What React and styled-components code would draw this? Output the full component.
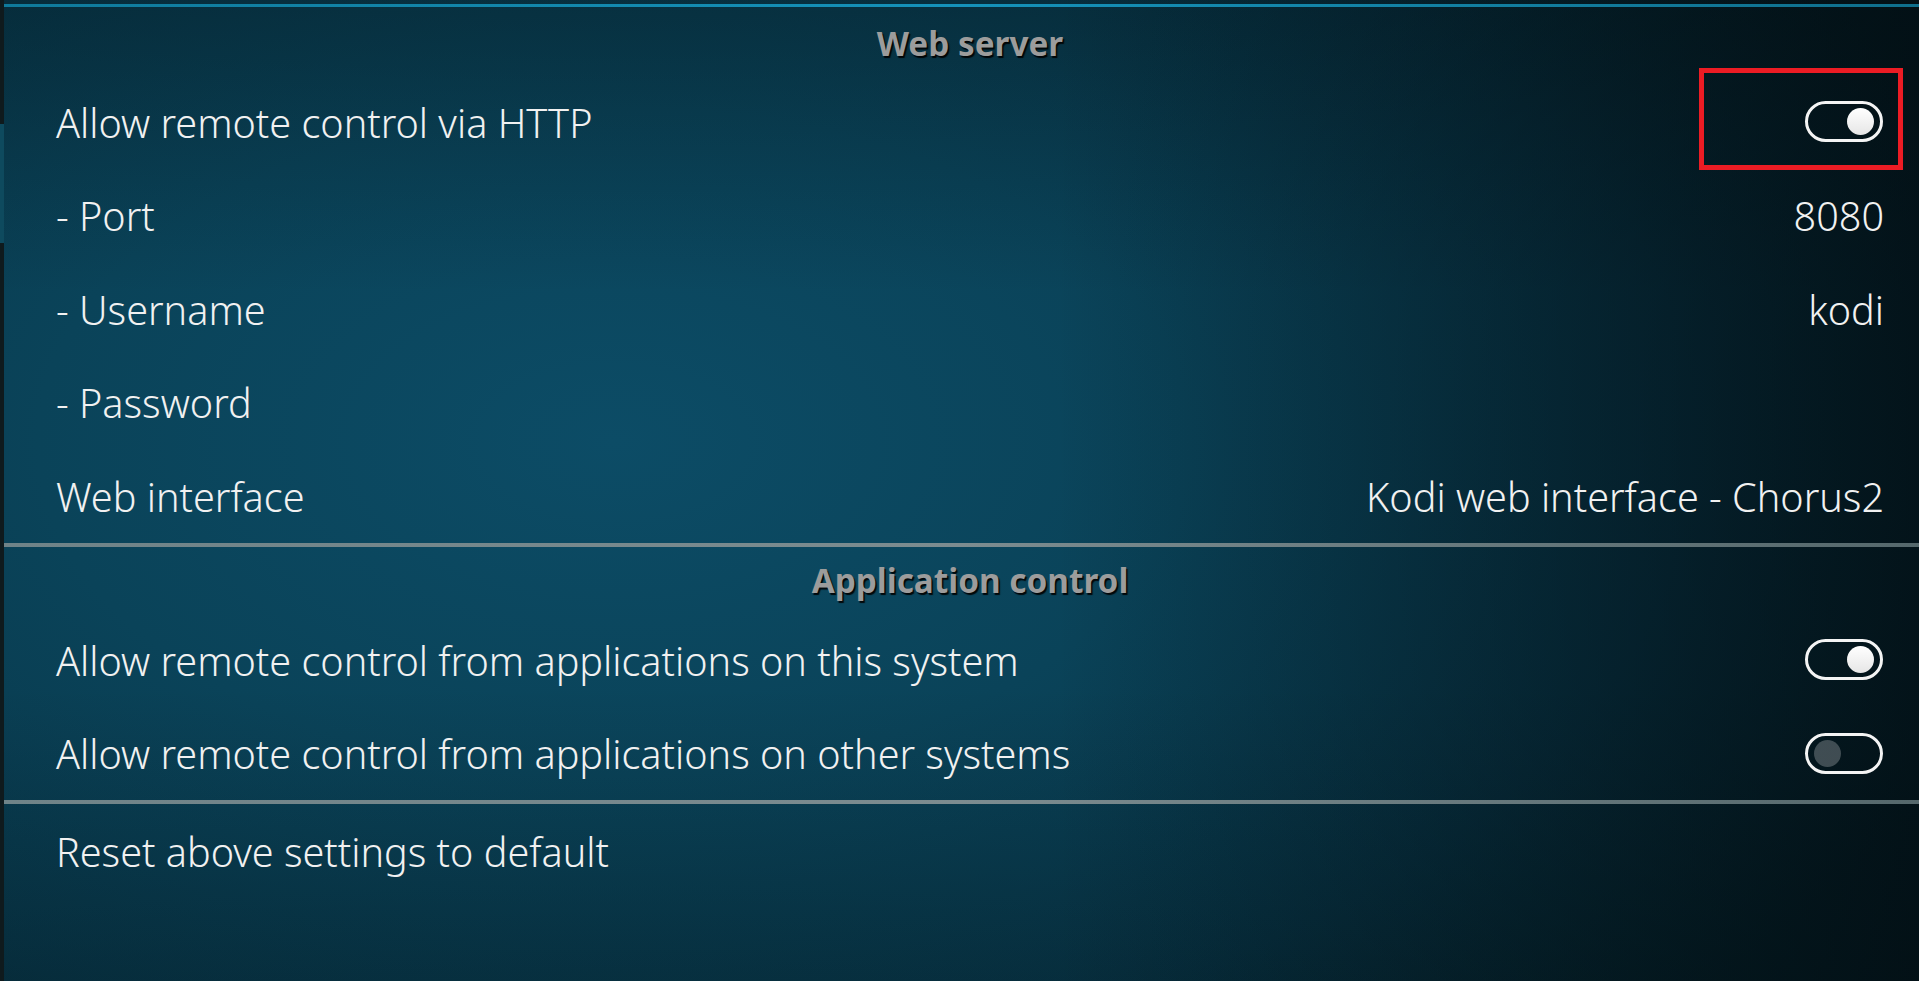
import React from 'react'
import styled, { createGlobalStyle } from 'styled-components'

const GlobalStyle = createGlobalStyle`
    html, body {
        margin: 0;
        padding: 0;
        height: 100%;
        background: #062a36;
    }
    body {
        font-family: "Noto Sans", "Open Sans", sans-serif;
        overflow: hidden;
    }
`

const webServer = [
    { label: 'Allow remote control via HTTP', toggle: true, on: true, marked: true },
    { label: '- Port', value: '8080' },
    { label: '- Username', value: 'kodi' },
    { label: '- Password' },
    { label: 'Web interface', value: 'Kodi web interface - Chorus2' },
]

const appControl = [
    { label: 'Allow remote control from applications on this system', toggle: true, on: true },
    { label: 'Allow remote control from applications on other systems', toggle: true, on: false },
]

const SettingRow = ({ item }) => {
    return (
        <Row>
            <Label>{item.label}</Label>
            {item.toggle ? (
                <Toggle $on={item.on}>
                    <Knob $on={item.on} />
                    {item.marked && <Marker />}
                </Toggle>
            ) : (
                item.value && <Value>{item.value}</Value>
            )}
        </Row>
    )
}

const App = () => {
    return (
        <Screen>
            <GlobalStyle />
            <EdgeStrip>
                <EdgeMarker />
            </EdgeStrip>
            <Main>
                <TopLine />
                <SectionTitle $h={68} $pt={4}>Web server</SectionTitle>
                {webServer.map((item) => (
                    <SettingRow key={item.label} item={item} />
                ))}
                <Divider />
                <SectionTitle $h={66.5}>Application control</SectionTitle>
                {appControl.map((item) => (
                    <SettingRow key={item.label} item={item} />
                ))}
                <Divider />
                <SettingRow item={{ label: 'Reset above settings to default' }} />
            </Main>
        </Screen>
    )
}

const Screen = styled.div`
    display: flex;
    width: 100%;
    min-height: 100vh;
    background:
        linear-gradient(to right, rgba(2, 10, 14, 0) 55%, rgba(2, 10, 14, 0.75) 100%),
        linear-gradient(to bottom, rgba(2, 14, 18, 0.3) 0%, rgba(2, 14, 18, 0) 30%, rgba(2, 14, 18, 0) 70%, rgba(2, 14, 18, 0.25) 100%),
        radial-gradient(ellipse 75% 85% at 32% 45%, #0c4c66 0%, #0a4359 40%, #08374a 75%, #062c38 100%);
`

const EdgeStrip = styled.div`
    width: 4px;
    flex-shrink: 0;
    background: #0f1a1d;
`

const EdgeMarker = styled.div`
    margin-top: 124px;
    height: 119px;
    background: #0e4a5e;
`

const Main = styled.main`
    flex: 1;
    display: flex;
    flex-direction: column;
    padding: 4px 35px 0 52px;
    min-width: 0;
`

const TopLine = styled.div`
    height: 3px;
    margin: 0 -35px 0 -52px;
    background: linear-gradient(to right, #0f7a9b, #1592ba 50%, #0f6f8c);
`

const SectionTitle = styled.h2`
    margin: 0;
    height: ${(p) => p.$h}px;
    padding-top: ${(p) => p.$pt || 0}px;
    box-sizing: border-box;
    display: flex;
    align-items: center;
    justify-content: center;
    font-size: 33.3px;
    font-weight: 700;
    color: #9c9c9c;
    text-shadow: 1.5px 1.5px 1px rgba(0, 0, 0, 0.9);
`

const Row = styled.div`
    height: 93.5px;
    display: flex;
    align-items: center;
    justify-content: space-between;
    font-size: 39.6px;
    font-weight: 300;
    line-height: 1;
    color: #f1f1f1;
`

const Label = styled.span`
    white-space: nowrap;
    padding-top: 4px;
`

const Value = styled.span`
    white-space: nowrap;
    text-align: right;
    padding-top: 4px;
`

const Toggle = styled.span`
    position: relative;
    display: flex;
    align-items: center;
    justify-content: ${(p) => (p.$on ? 'flex-end' : 'flex-start')};
    width: 78px;
    height: 41px;
    padding: 0 6px;
    margin-right: 1px;
    box-sizing: border-box;
    border: 3px solid #f4f4f4;
    border-radius: 21px;
`

const Knob = styled.span`
    width: 27px;
    height: 27px;
    border-radius: 50%;
    background: ${(p) =>
        p.$on ? 'linear-gradient(to bottom, #ffffff, #e6e6e6)' : 'rgba(255, 255, 255, 0.24)'};
`

const Marker = styled.span`
    position: absolute;
    top: -36px;
    bottom: -31px;
    left: -109px;
    right: -23px;
    border: 5px solid #ec1c24;
    pointer-events: none;
`

const Divider = styled.div`
    height: 4px;
    margin: 0 -35px 0 -52px;
    background: linear-gradient(to right, #6f8388, #7c8c90 50%, #55686c);
`

export default App
